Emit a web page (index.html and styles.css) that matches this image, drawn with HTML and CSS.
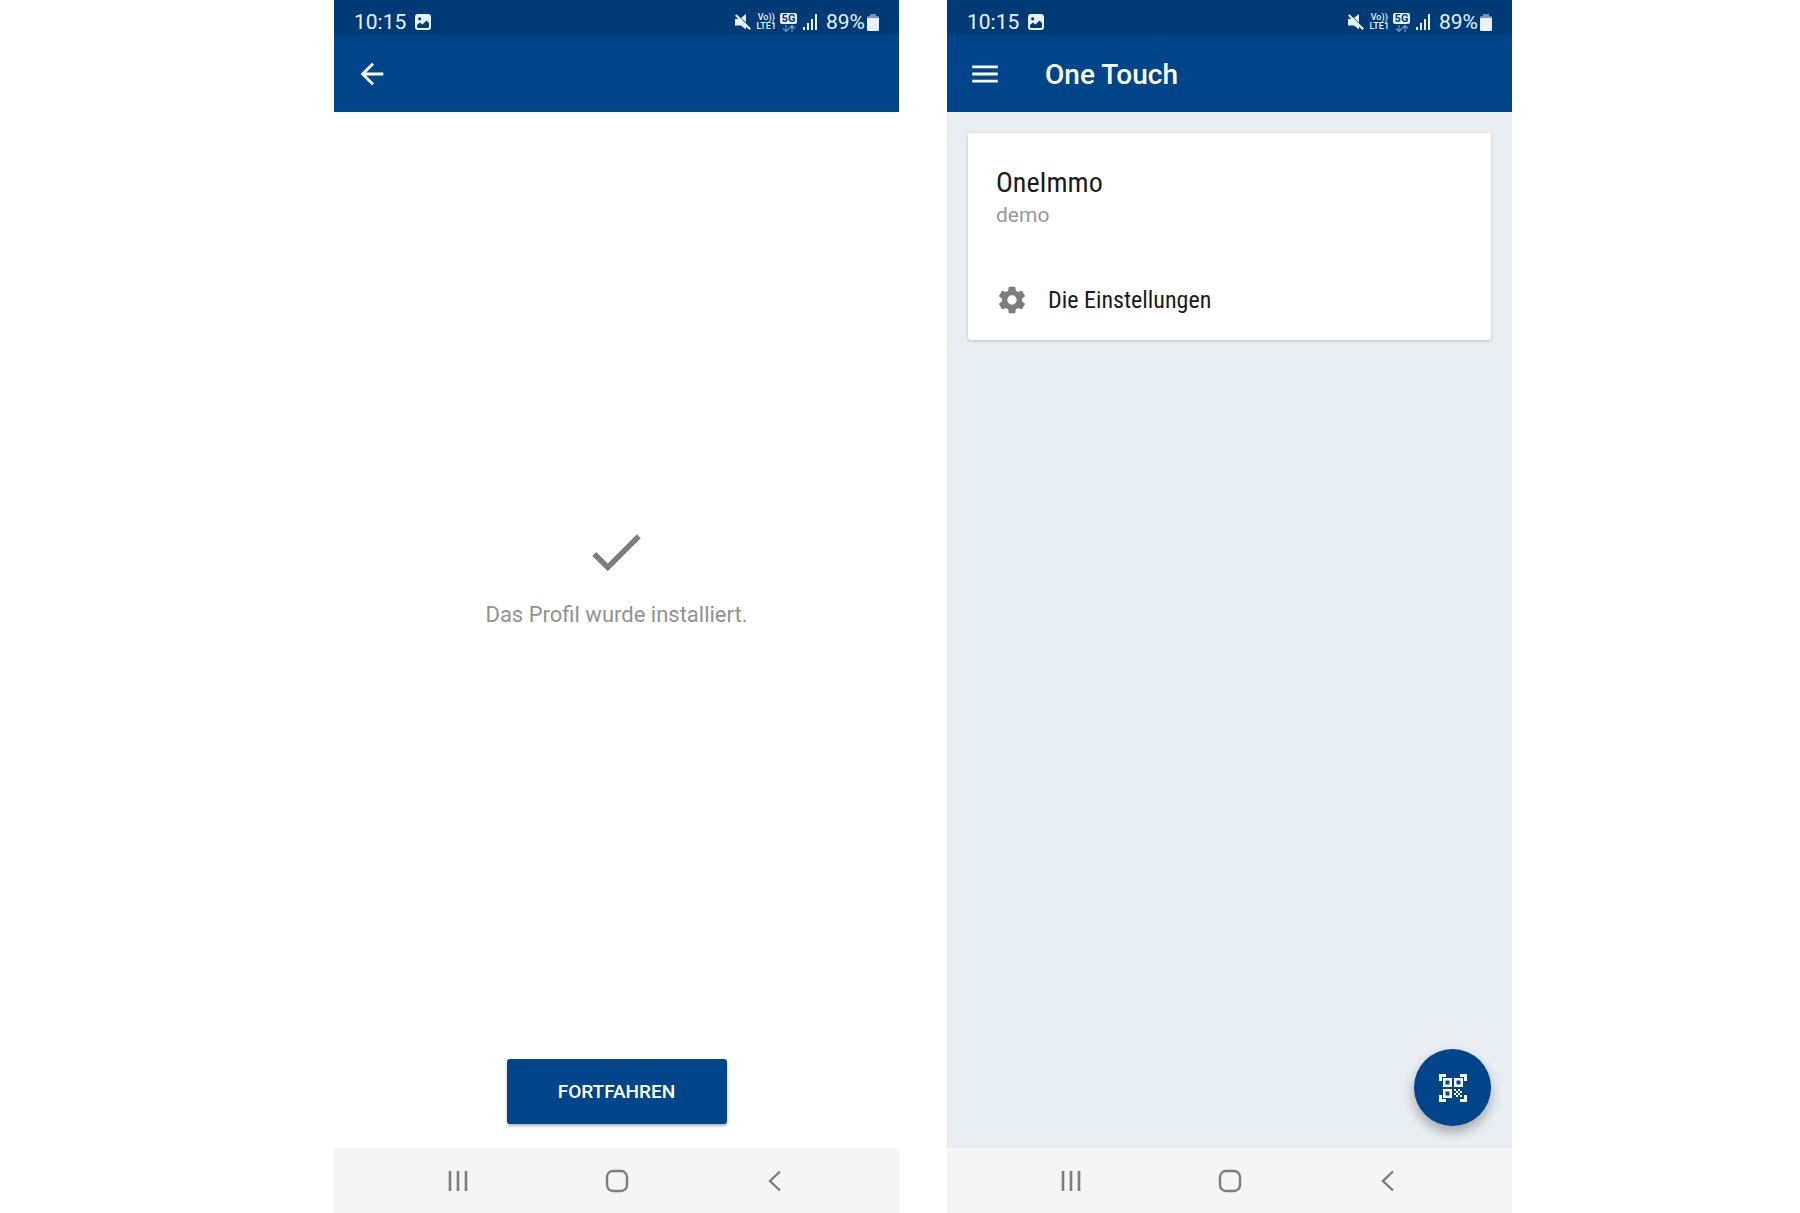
FILE: index.html
```html
<!DOCTYPE html>
<html lang="de">
  <head>
    <meta charset="utf-8">
    <meta name="viewport" content="width=device-width, initial-scale=1.0">
    <title>One Touch</title>
    <link rel="stylesheet" href="styles.css">
  </head>
  <body>
    <!-- shared icons -->
    <svg class="sprite" aria-hidden="true">
      <symbol id="image" viewBox="0 0 16 16">
        <path fill-rule="evenodd" d="M3 0h10a3 3 0 0 1 3 3v10a3 3 0 0 1-3 3H3a3 3 0 0 1-3-3V3a3 3 0 0 1 3-3zM2 11v1.500a1.500 1.500 0 0 0 1.500 1.500h9a1.500 1.500 0 0 0 1.500-1.500V9l-2.500-2.500L7.500 10.500 5 8.500zM4.700 3.200a1.600 1.600 0 1 0 0 3.200 1.600 1.600 0 0 0 0-3.200z"/>
      </symbol>
      <symbol id="mute" viewBox="0 0 16 16">
        <path d="M0 5h4l7 7v3.500L6 11.500H0zM6 4L11 0v8.500z"/>
        <path d="M.8 1L15.200 15.200" fill="none" stroke="currentColor" stroke-width="2.200"/>
      </symbol>
      <symbol id="data" viewBox="0 0 14 7">
        <path d="M4 0v6M1 3.500l3 3 3-3M10 7V1M7 3.500l3-3 3 3" fill="none" stroke="currentColor" stroke-width="1.200"/>
      </symbol>
      <symbol id="signal" viewBox="0 0 15 16">
        <path d="M0 13h2v3H0zM4 9h2v7H4zM8 5h2v11H8zM12 0h2v16h-2z"/>
      </symbol>
      <symbol id="battery" viewBox="0 0 12 17">
        <path opacity=".5" d="M3 0h6v2h1.500A1.500 1.500 0 0 1 12 3.500V5H0V3.500A1.500 1.500 0 0 1 1.500 2H3z"/>
        <path d="M0 4h12v11.500a1.500 1.500 0 0 1-1.500 1.500h-9A1.500 1.500 0 0 1 0 15.500z"/>
      </symbol>
      <symbol id="recents" viewBox="0 0 24 24">
        <path d="M4 2v20M12 2v20M20 2v20" fill="none" stroke="currentColor" stroke-width="2.600"/>
      </symbol>
      <symbol id="home" viewBox="0 0 24 24">
        <rect x="2" y="2" width="20" height="20" rx="6" fill="none" stroke="currentColor" stroke-width="2.400"/>
      </symbol>
      <symbol id="back" viewBox="0 0 24 24">
        <path d="M17 2.500L7 12l10 9.500" fill="none" stroke="currentColor" stroke-width="2.400"/>
      </symbol>
    </svg>

    <main class="screens">
      <section class="phone">
        <div class="status">
          <span class="time">10:15</span>
          <svg class="icon-image"><use href="#image"/></svg>
          <div class="status-right">
            <svg class="icon-mute"><use href="#mute"/></svg>
            <span class="volte"><span>Vo))</span><span>LTE1</span></span>
            <span class="network"><b>5G</b><svg><use href="#data"/></svg></span>
            <svg class="icon-signal"><use href="#signal"/></svg>
            <span class="level">89%</span>
            <svg class="icon-battery"><use href="#battery"/></svg>
          </div>
        </div>
        <header class="appbar">
          <button class="appbar-btn" aria-label="Zurück">
            <svg viewBox="0 0 24 24"><path d="M20 11H7.830l5.590-5.590L12 4l-8 8 8 8 1.410-1.410L7.830 13H20v-2z"/></svg>
          </button>
        </header>
        <div class="content done">
          <div class="message">
            <svg class="check" viewBox="0 0 24 24"><path d="M9 16.170L4.830 12l-1.420 1.410L9 19 21 7l-1.410-1.410z"/></svg>
            <p>Das Profil wurde installiert.</p>
          </div>
          <button class="continue">FORTFAHREN</button>
        </div>
        <nav class="navbar">
          <button aria-label="Letzte Apps"><svg><use href="#recents"/></svg></button>
          <button aria-label="Startseite"><svg><use href="#home"/></svg></button>
          <button aria-label="Zurück"><svg><use href="#back"/></svg></button>
        </nav>
      </section>

      <section class="phone">
        <div class="status">
          <span class="time">10:15</span>
          <svg class="icon-image"><use href="#image"/></svg>
          <div class="status-right">
            <svg class="icon-mute"><use href="#mute"/></svg>
            <span class="volte"><span>Vo))</span><span>LTE1</span></span>
            <span class="network"><b>5G</b><svg><use href="#data"/></svg></span>
            <svg class="icon-signal"><use href="#signal"/></svg>
            <span class="level">89%</span>
            <svg class="icon-battery"><use href="#battery"/></svg>
          </div>
        </div>
        <header class="appbar">
          <button class="appbar-btn" aria-label="Menü">
            <svg viewBox="0 0 24 24"><path d="M3 18h18v-2H3v2zm0-5h18v-2H3v2zm0-7v2h18V6H3z"/></svg>
          </button>
          <h1>One Touch</h1>
        </header>
        <div class="content profiles">
          <article class="card">
            <h2>OneImmo</h2>
            <p>demo</p>
            <button class="settings">
              <svg viewBox="0 0 24 24"><path d="M19.430 12.980c.04-.32.07-.64.07-.98s-.03-.66-.07-.98l2.110-1.650c.19-.15.24-.42.12-.64l-2-3.460c-.12-.22-.39-.3-.61-.22l-2.490 1c-.52-.4-1.080-.73-1.690-.98l-.38-2.650C14.460 2.180 14.250 2 14 2h-4c-.25 0-.46.18-.49.42l-.38 2.650c-.61.25-1.170.59-1.690.98l-2.490-1c-.23-.09-.49 0-.61.22l-2 3.460c-.13.22-.07.49.12.64l2.110 1.650c-.04.32-.07.65-.07.98s.03.66.07.98l-2.110 1.650c-.19.15-.24.42-.12.64l2 3.460c.12.22.39.3.61.22l2.490-1c.52.4 1.080.73 1.690.98l.38 2.650c.03.24.24.42.49.42h4c.25 0 .46-.18.49-.42l.38-2.650c.61-.25 1.170-.59 1.690-.98l2.490 1c.23.09.49 0 .61-.22l2-3.460c.12-.22.07-.49-.12-.64l-2.110-1.650zM12 15.500c-1.930 0-3.500-1.570-3.500-3.500s1.570-3.500 3.500-3.500 3.500 1.570 3.500 3.500-1.570 3.500-3.500 3.500z"/></svg>
              Die Einstellungen
            </button>
          </article>
          <button class="fab" aria-label="QR-Code scannen">
            <svg viewBox="0 0 28 28">
              <path d="M0 0h7v3H3v4H0zM21 0h7v7h-3V3h-4zM0 21h3v4h4v3H0zM25 21h3v7h-7v-3h4z"/>
              <path fill-rule="evenodd" d="M4 4h9v9H4zM6.500 6.500v4h4v-4zM15 4h9v9h-9zM17.500 6.500v4h4v-4zM4 15h9v9H4zM6.500 17.500v4h4v-4z"/>
              <path d="M15 15h2v2h-2zM19 15h2v2h-2zM17 17h2v2h-2zM21 17h2v2h-2zM15 19h2v2h-2zM19 19h2v2h-2zM17 21h2v2h-2zM21 21h2v2h-2z"/>
            </svg>
          </button>
        </div>
        <nav class="navbar">
          <button aria-label="Letzte Apps"><svg><use href="#recents"/></svg></button>
          <button aria-label="Startseite"><svg><use href="#home"/></svg></button>
          <button aria-label="Zurück"><svg><use href="#back"/></svg></button>
        </nav>
      </section>
    </main>
  </body>
</html>
```
FILE: styles.css
```css
* {
  box-sizing: border-box;
}
body {
  margin: 0;
  background: #fff;
  font-family: Roboto, "Liberation Sans", sans-serif;
}
h1, h2, p {
  margin: 0;
  font-weight: 400;
}
button {
  padding: 0;
  border: 0;
  background: none;
  color: inherit;
  font: inherit;
  cursor: pointer;
}
svg {
  display: block;
  fill: currentColor;
}
.sprite {
  position: absolute;
  width: 0;
  height: 0;
}
.screens {
  display: flex;
  gap: 48px;
  min-height: 100vh;
  padding: 0 288px 0 334px;
}
.phone {
  flex: 1;
  min-width: 0;
  display: flex;
  flex-direction: column;
}

/* status bar */
.status {
  display: flex;
  align-items: center;
  height: 36px;
  padding: 8px 20px 0;
  background: linear-gradient(#003b78 90%, #004081);
  color: #e8f2ff;
  font-size: 21px;
  line-height: 24px;
}
.icon-image {
  width: 16px;
  height: 16px;
  margin-left: 9px;
}
.status-right {
  display: flex;
  align-items: center;
  margin-left: auto;
}
.icon-mute {
  width: 16px;
  height: 16px;
}
.volte {
  display: flex;
  flex-direction: column;
  align-items: center;
  margin-left: 6px;
  font-size: 9px;
  font-weight: 500;
  line-height: 9px;
}
.network {
  display: flex;
  flex-direction: column;
  align-items: center;
  gap: 1px;
  margin-left: 4px;
}
.network b {
  width: 17px;
  border-radius: 2px;
  background: #e8f2ff;
  color: #003b78;
  font-size: 11px;
  line-height: 11px;
  text-align: center;
}
.network svg {
  width: 14px;
  height: 7px;
  opacity: .5;
}
.icon-signal {
  width: 15px;
  height: 16px;
  margin: 0 8px 0 6px;
}
.icon-battery {
  width: 12px;
  height: 17px;
  margin-left: 2px;
}

/* app bar */
.appbar {
  display: flex;
  align-items: center;
  height: 76px;
  padding: 0 21px;
  background: #00458a;
  color: #fff;
}
.appbar-btn svg {
  width: 34px;
  height: 34px;
}
.appbar h1 {
  padding-top: 2px;
  margin-left: 43px;
  font-size: 28px;
  font-weight: 500;
  line-height: 32px;
}

.content {
  flex: 1;
  display: flex;
  flex-direction: column;
}
.done {
  align-items: center;
  padding-bottom: 24px;
}
.message {
  flex: 1;
  display: flex;
  flex-direction: column;
  align-items: center;
  justify-content: center;
  gap: 16px;
  padding-bottom: 24px;
  color: #929292;
  font-size: 22px;
  line-height: 28px;
}
.check {
  width: 66px;
  height: 66px;
  color: #7d7d7d;
}
.continue {
  width: 220px;
  height: 65px;
  border-radius: 3px;
  background: #00458a;
  box-shadow: 0 2px 3px rgba(0, 0, 0, .3);
  color: #fff;
  font-size: 19px;
  font-weight: 500;
}

.profiles {
  justify-content: space-between;
  padding: 21px 21px 22px;
  background: #e9eef2;
}
.card {
  padding: 32px 28px 22px;
  border-radius: 3px;
  background: #fff;
  box-shadow: 0 1px 3px rgba(0, 0, 0, .2);
}
.card h2,
.settings {
  color: #1b1b1b;
  font-family: "Roboto Condensed", Roboto, "Liberation Sans", sans-serif;
}
.card h2 {
  font-size: 28px;
  line-height: 36px;
}
.card p {
  color: #999;
  font-size: 21px;
  line-height: 28px;
}
.settings {
  display: flex;
  align-items: center;
  gap: 20px;
  margin-top: 53px;
  font-size: 24px;
  line-height: 36px;
}
.settings svg {
  width: 32px;
  height: 32px;
  color: #7d7d7d;
}
.fab {
  align-self: flex-end;
  display: grid;
  place-items: center;
  width: 77px;
  height: 77px;
  border-radius: 50%;
  background: #00458a;
  box-shadow: 0 6px 12px rgba(0, 0, 0, .3);
  color: #fff;
}
.fab svg {
  width: 28px;
  height: 28px;
}

/* system navigation */
.navbar {
  display: grid;
  grid-template-columns: repeat(3, 28%);
  justify-content: center;
  height: 65px;
  background: #f5f5f5;
  color: #7d7d7d;
}
.navbar button {
  display: grid;
  place-items: center;
}
.navbar svg {
  width: 24px;
  height: 24px;
}
```
